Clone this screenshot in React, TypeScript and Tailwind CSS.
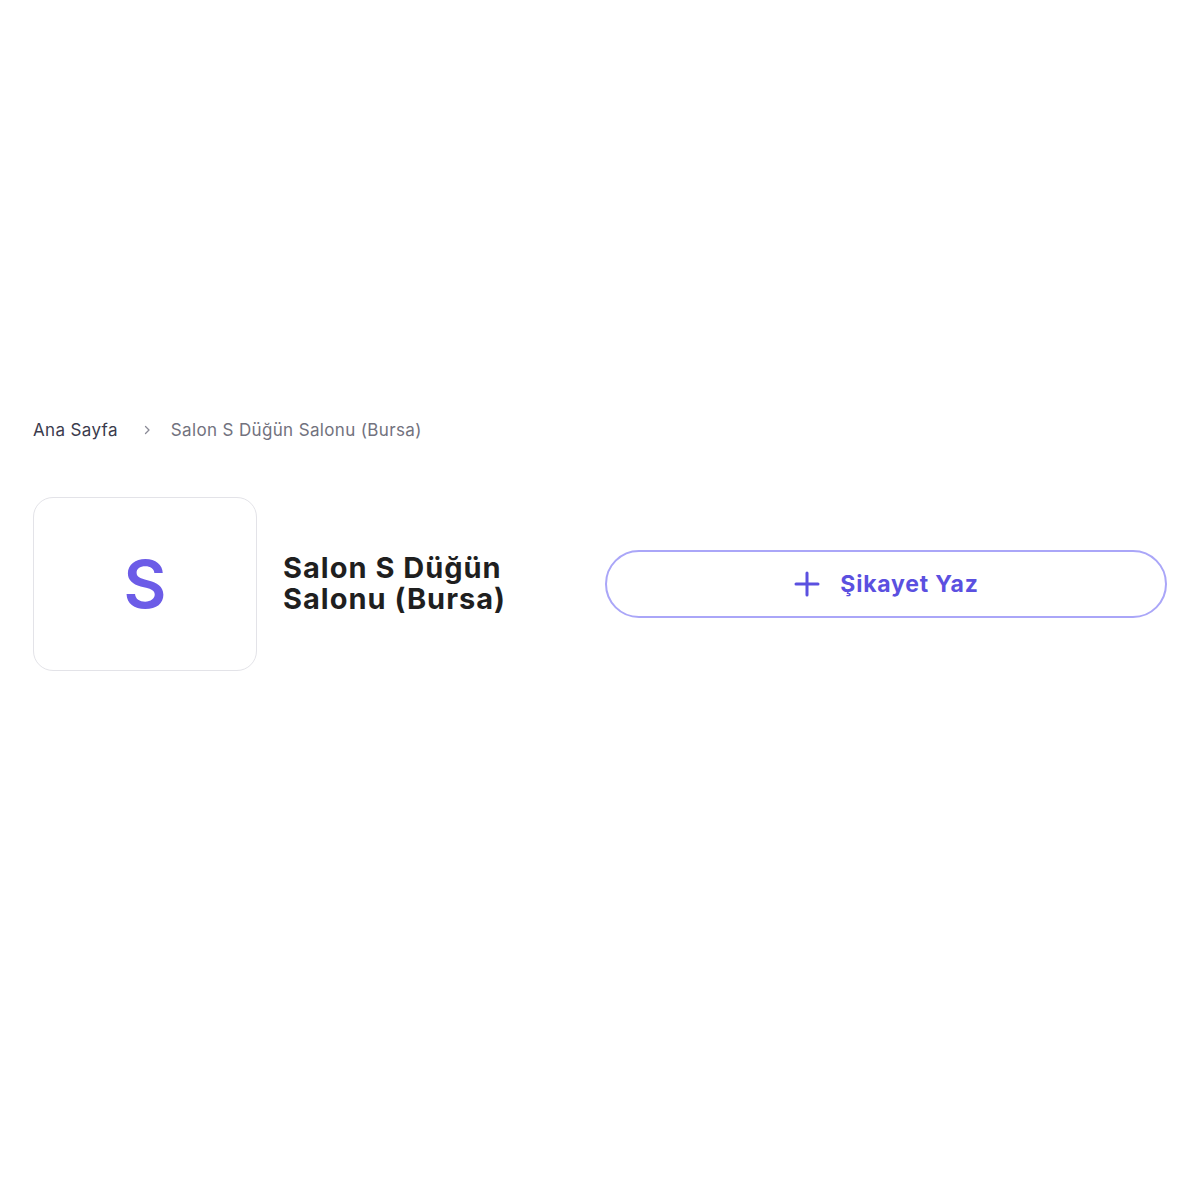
import React from "react";

export default function App() {
  return (
    <div className="w-[1200px] h-[1200px] bg-white" style={{ fontFamily: "Inter, 'Noto Sans', sans-serif" }}>
      <div className="px-[33px] pt-[418px]">
        <nav className="flex items-center text-[17px] leading-[24px] tracking-[0.35px]">
          <span className="text-[#3b3b4d]">Ana Sayfa</span>
          <svg className="ml-[24px] mr-[19px] text-[#8a8a96]" width="10" height="10" viewBox="0 0 10 10" fill="none">
            <path d="M3.5 1.5L7 5L3.5 8.5" stroke="currentColor" strokeWidth="1.3" strokeLinecap="round" strokeLinejoin="round" />
          </svg>
          <span className="text-[#72727e]">Salon S Düğün Salonu (Bursa)</span>
        </nav>
        <div className="flex items-center mt-[55px]">
          <div className="w-[572px] flex items-center gap-[26px] shrink-0">
            <div className="w-[224px] h-[174px] rounded-[20px] border border-[#e3e3e8] bg-white flex items-center justify-center shrink-0">
              <span className="text-[66px] font-semibold text-[#6c5ce7] leading-none">S</span>
            </div>
            <h1 className="text-[29px] font-bold leading-[31px] text-[#1f1f1f] tracking-[1px] w-[240px] -mt-[2px]">
              Salon S Düğün Salonu (Bursa)
            </h1>
          </div>
          <button className="flex-1 h-[68px] rounded-full border-2 border-[#aaa6f8] bg-white flex items-center justify-center gap-[19px] text-[#5b50e0]">
            <svg width="28" height="28" viewBox="0 0 28 28" fill="none">
              <path d="M14 3V25M3 14H25" stroke="currentColor" strokeWidth="3" strokeLinecap="round" />
            </svg>
            <span className="text-[23px] font-bold tracking-[0.8px]">Şikayet Yaz</span>
          </button>
        </div>
      </div>
    </div>
  );
}
